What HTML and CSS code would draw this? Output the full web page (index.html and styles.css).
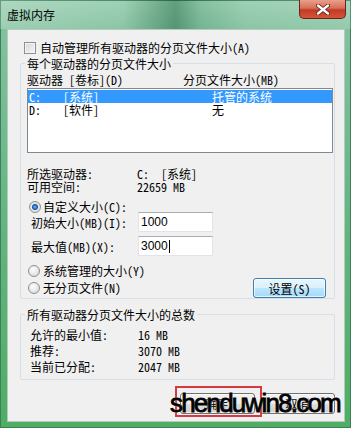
FILE: index.html
```html
<!DOCTYPE html>
<html lang="zh-CN">
<head>
    <meta charset="UTF-8">
    <title>虚拟内存</title>
    <link rel="stylesheet" href="styles.css">
</head>
<body>
    <div class="window">
        <div class="titlebar">
            <span class="title">虚拟内存</span>
            <div class="close-btn">
                <svg width="14" height="11" viewBox="0 0 14 11">
                    <path d="M2 1.5 L12 9.5 M12 1.5 L2 9.5" stroke="#5a1a12" stroke-width="4" stroke-linecap="round"/>
                    <path d="M2 1.5 L12 9.5 M12 1.5 L2 9.5" stroke="#fff" stroke-width="2.4" stroke-linecap="round"/>
                </svg>
            </div>
        </div>

        <div class="client">
            <div class="check-row">
                <span class="checkbox"></span>
                <span>自动管理所有驱动器的分页文件大小(A)</span>
            </div>

            <fieldset class="group group-drives">
                <legend>每个驱动器的分页文件大小</legend>
                <div class="group-body">
                    <div class="drive-head">
                        <span>驱动器 [卷标](D)</span>
                        <span>分页文件大小(MB)</span>
                    </div>
                    <div class="drive-list">
                        <div class="drive-row selected">
                            <span>C:</span><span>[系统]</span><span>托管的系统</span>
                        </div>
                        <div class="drive-row">
                            <span>D:</span><span>[软件]</span><span>无</span>
                        </div>
                    </div>

                    <div class="info-grid">
                        <span>所选驱动器:</span><span>C:&nbsp;&nbsp;[系统]</span>
                        <span>可用空间:</span><span>22659 MB</span>
                    </div>

                    <div class="radio-row custom">
                        <span class="radio checked"></span>
                        <span>自定义大小(C):</span>
                    </div>
                    <div class="size-row">
                        <span class="size-label">初始大小(MB)(I):</span>
                        <div class="textbox">1000</div>
                    </div>
                    <div class="size-row second">
                        <span class="size-label">最大值(MB)(X):</span>
                        <div class="textbox">3000<span class="caret"></span></div>
                    </div>

                    <div class="bottom-opts">
                        <div class="radio-col">
                            <div class="radio-row">
                                <span class="radio"></span>
                                <span>系统管理的大小(Y)</span>
                            </div>
                            <div class="radio-row">
                                <span class="radio"></span>
                                <span>无分页文件(N)</span>
                            </div>
                        </div>
                        <button class="btn btn-hot set-btn">设置(S)</button>
                    </div>
                </div>
            </fieldset>

            <fieldset class="group group-total">
                <legend>所有驱动器分页文件大小的总数</legend>
                <div class="group-body">
                    <div class="total-grid">
                        <span>允许的最小值:</span><span>16 MB</span>
                        <span>推荐:</span><span>3070 MB</span>
                        <span>当前已分配:</span><span>2047 MB</span>
                    </div>
                </div>
            </fieldset>

            <div class="dialog-buttons">
                <button class="btn">确定</button>
                <button class="btn">取消</button>
            </div>
        </div>

        <!-- annotation + watermark lying over the dialog -->
        <div class="mark-box"></div>
        <div class="watermark">shenduwin8.com</div>
    </div>
</body>
</html>
```

FILE: styles.css
```css
body {
    margin: 0;
    font-family: "Noto Sans Mono CJK SC", "Noto Sans CJK SC", sans-serif;
    font-size: 12px;
    color: #000;
}

.window {
    position: relative;
    width: 351px;
    height: 428px;
    box-sizing: border-box;
    padding: 0 6px 6px 7px;
    background: linear-gradient(180deg, #97cdb0 0, #82c19e 28px, #62b47e 55%, #4fae62 100%);
    box-shadow: inset 0 0 0 1px #3d7f5c;
    overflow: hidden;
}

.titlebar {
    height: 29px;
    display: flex;
    justify-content: space-between;
    align-items: flex-start;
    margin: 0 -6px 0 -7px;
    padding-left: 7px;
    background: linear-gradient(90deg,
        rgba(255, 255, 255, 0.22) 0%,
        rgba(255, 255, 255, 0.08) 35%,
        rgba(0, 70, 35, 0.35) 50%,
        rgba(0, 70, 35, 0.1) 57%,
        rgba(255, 255, 255, 0.08) 70%,
        rgba(255, 255, 255, 0.15) 100%);
}

.title {
    margin-top: 9px;
    line-height: 12px;
    font-family: "Noto Sans CJK SC", sans-serif;
}

.close-btn {
    width: 47px;
    height: 19px;
    margin-right: 5px;
    box-sizing: border-box;
    border: 1px solid #6a2418;
    border-top: none;
    border-radius: 0 0 5px 5px;
    background: linear-gradient(180deg, #e8a08c 0%, #d76f58 45%, #c13a25 55%, #d5543a 100%);
    display: flex;
    align-items: center;
    justify-content: center;
}

.client {
    height: 393px;
    box-sizing: border-box;
    border: 1px solid #b6cbbf;
    background-color: #f0f0f0;
    display: flex;
    flex-direction: column;
}

.check-row {
    display: flex;
    align-items: center;
    gap: 4px;
    height: 12px;
    line-height: 12px;
    margin-top: 12px;
    padding-left: 16px;
}

.checkbox {
    width: 12px;
    height: 12px;
    box-sizing: border-box;
    border: 1px solid #8f8f8f;
    background: linear-gradient(135deg, #d6d6d6, #f6f6f6);
    box-shadow: inset 0 0 0 1px #f4f4f4;
}

.group {
    margin: 0 0 0 12px;
    padding: 0;
    width: 315px;
    box-sizing: border-box;
    border: 1px solid #d5dfe5;
    border-radius: 2px;
    min-inline-size: 0;
}

.group legend {
    margin-left: 4px;
    padding: 0 2px;
    line-height: 13px;
}

.group-drives {
    margin-top: 3px;
}

.group-drives .group-body {
    padding: 0 1px 0 6px;
}

.drive-head {
    display: grid;
    grid-template-columns: 156px 1fr;
    line-height: 13px;
    margin-top: 3px;
}

.drive-list {
    margin-top: 2px;
    height: 65px;
    box-sizing: border-box;
    border: 1px solid #828790;
    background-color: #fff;
    padding-top: 1px;
}

.drive-row {
    display: grid;
    grid-template-columns: 34px 149px 1fr;
    height: 13px;
    line-height: 13px;
    padding-left: 1px;
}

.drive-row.selected {
    background-color: #3399ff;
    color: #fff;
}

.info-grid {
    display: grid;
    grid-template-columns: 110px 1fr;
    line-height: 13px;
    margin-top: 14px;
}

.radio-row {
    display: flex;
    align-items: center;
    gap: 3px;
    height: 13px;
    line-height: 13px;
    padding-left: 1px;
}

.radio-row.custom {
    height: 10px;
    line-height: 12px;
    margin-top: 9px;
    padding-left: 2px;
    gap: 2px;
}

.radio {
    width: 12px;
    height: 12px;
    box-sizing: border-box;
    border-radius: 50%;
    border: 1px solid #8e8f8f;
    background: radial-gradient(circle at 40% 35%, #ffffff 0, #e4e4e4 60%, #cfcfcf 100%);
}

.radio.checked {
    background: radial-gradient(circle, #6fb3ee 0, #2c6fc0 28%, #1d5aa5 38%, #e8e8e8 48%, #d2d2d2 100%);
}

.size-row {
    display: grid;
    grid-template-columns: 111px 75px;
    align-items: center;
    height: 20px;
}

.size-row.second {
    margin-top: 4px;
}

.size-label {
    padding-left: 4px;
}

.textbox {
    height: 20px;
    box-sizing: border-box;
    border: 1px solid #e2e3ea;
    border-top-color: #abadb3;
    background-color: #fff;
    padding-left: 2px;
    font-family: "Liberation Sans", sans-serif;
    font-size: 12px;
    line-height: 18px;
    display: flex;
    align-items: center;
}

.caret {
    display: inline-block;
    width: 1px;
    height: 13px;
    background-color: #000;
    margin-left: 1px;
}

.bottom-opts {
    display: flex;
    justify-content: space-between;
    align-items: flex-start;
    margin-top: 8px;
}

.radio-col {
    display: flex;
    flex-direction: column;
    gap: 4px;
}

.btn {
    height: 21px;
    width: 75px;
    box-sizing: border-box;
    border: 1px solid #707070;
    border-radius: 3px;
    background: linear-gradient(180deg, #f2f2f2 0%, #ebebeb 50%, #dddddd 50%, #cfcfcf 100%);
    box-shadow: inset 0 0 0 1px rgba(255, 255, 255, 0.7);
    font-family: inherit;
    font-size: 12px;
    color: #000;
    padding: 0;
}

.btn-hot {
    border-color: #3c7fb1;
    background: linear-gradient(180deg, #eaf6fd 0%, #d9f0fc 50%, #bee6fd 50%, #a7d9f5 100%);
}

.set-btn {
    width: 73px;
    height: 20px;
    margin-top: 14px;
    margin-right: 7px;
}

.group-total {
    margin-top: 9px;
}

.group-total .group-body {
    padding: 6px 0 4px 9px;
}

.total-grid {
    display: grid;
    grid-template-columns: 108px 1fr;
    line-height: 16px;
}

.dialog-buttons {
    display: flex;
    justify-content: flex-end;
    gap: 5px;
    margin-top: 13px;
    padding-right: 9px;
}

.mark-box {
    position: absolute;
    left: 175px;
    top: 386px;
    width: 87px;
    height: 31px;
    box-sizing: border-box;
    border: 2px solid #d8393f;
}

.watermark {
    position: absolute;
    left: 170px;
    top: 390px;
    font-family: "Liberation Sans", sans-serif;
    font-size: 26px;
    line-height: 26px;
    letter-spacing: -1.8px;
    color: #000;
    -webkit-text-stroke: 0.8px #000;
    text-shadow: 0 0 2px #fff, 0 0 1px #fff;
}
```
